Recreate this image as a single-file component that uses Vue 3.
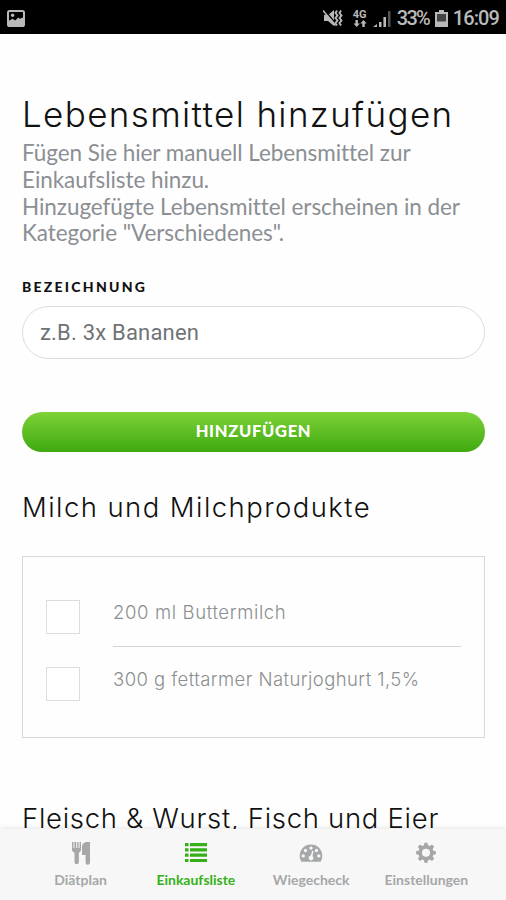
<template>
  <div class="app">
    <!-- Statusleiste -->
    <header class="statusbar">
      <svg class="icon-bild" viewBox="0 0 18 17">
        <rect x="1" y="1" width="16" height="15" rx="1.6" fill="none" stroke="#b9b9b9" stroke-width="2" />
        <path d="M2 15v-4.200l3.600-2 2.600 1.600 3-3 1.600 1.400L16 7.400V15z" fill="#b9b9b9" />
        <circle cx="5.600" cy="5.200" r="1.700" fill="#b9b9b9" />
      </svg>
      <div class="status-rechts">
        <svg class="icon-stumm" viewBox="0 0 20 18">
          <path d="M1 6h4l6-5v16l-6-5H1z" fill="#b9b9b9" />
          <path d="M1.500 1l12.500 15" stroke="#000" stroke-width="1.400" />
          <path d="M0 1.500l12.500 15" stroke="#b9b9b9" stroke-width="1.600" />
          <path d="M14 1.500l-1.500 2.500 2 2.500-2 2.500 2 2.500-2 2.500 1.500 2.500M18 1.500L16.500 4l2 2.500-2 2.500 2 2.500-2 2.500 1.500 2.500" fill="none" stroke="#b9b9b9" stroke-width="1.900" />
        </svg>
        <div class="netz">
          <span>4G</span>
          <svg viewBox="0 0 14 7">
            <path d="M2.500 0v3.500H.5L3.700 7l3.200-3.500h-2V0zM9.300 7V3.500h-2L10.500 0l3.200 3.500h-2V7z" fill="#b9b9b9" />
          </svg>
        </div>
        <svg class="icon-signal" viewBox="0 0 18 17">
          <path d="M0 17l4-3v3zM6 12h2.500v5H6zM10.400 7h2.600v10h-2.600z" fill="#b9b9b9" />
          <path d="M15 1h2.500v16H15z" fill="#555" />
        </svg>
        <span class="prozent">33%</span>
        <svg class="icon-akku" viewBox="0 0 13 17">
          <path d="M4 0h5v2h4v15H0V2h4z" fill="#b9b9b9" />
          <path d="M2 4h9v7.500H2z" fill="#444" />
        </svg>
        <span class="uhrzeit">16:09</span>
      </div>
    </header>

    <main class="inhalt">
      <h1>Lebensmittel hinzufügen</h1>
      <p class="beschreibung">
        Fügen Sie hier manuell Lebensmittel zur<br />
        Einkaufsliste hinzu.<br />
        Hinzugefügte Lebensmittel erscheinen in der<br />
        Kategorie "Verschiedenes".
      </p>

      <form @submit.prevent="hinzufuegen">
        <label for="bezeichnung">Bezeichnung</label>
        <input id="bezeichnung" v-model="bezeichnung" type="text" placeholder="z.B. 3x Bananen" />
        <button type="submit">Hinzufügen</button>
      </form>

      <section v-for="kategorie in kategorien" :key="kategorie.name">
        <h2>{{ kategorie.name }}</h2>
        <ul v-if="kategorie.artikel.length" class="liste">
          <li v-for="artikel in kategorie.artikel" :key="artikel.name" @click="artikel.erledigt = !artikel.erledigt">
            <span class="checkbox" :class="{ aktiv: artikel.erledigt }"></span>
            <span class="artikel-name">{{ artikel.name }}</span>
          </li>
        </ul>
      </section>
    </main>

    <!-- Tab-Navigation -->
    <nav class="tabs">
      <a v-for="tab in tabs" :key="tab.id" :class="['tab', tab.id, { aktiv: tab.id === aktiverTab }]" @click="aktiverTab = tab.id">
        <svg viewBox="0 0 24 24">
          <path :d="tab.icon" fill="currentColor" fill-rule="evenodd" />
        </svg>
        <span>{{ tab.titel }}</span>
      </a>
    </nav>
  </div>
</template>

<script setup>
import { ref } from 'vue'

const bezeichnung = ref('')
const aktiverTab = ref('einkauf')

const kategorien = ref([
  {
    name: 'Milch und Milchprodukte',
    artikel: [
      { name: '200 ml Buttermilch', erledigt: false },
      { name: '300 g fettarmer Naturjoghurt 1,5%', erledigt: false }
    ]
  },
  { name: 'Fleisch & Wurst, Fisch und Eier', artikel: [] }
])

const tabs = [
  {
    id: 'diaet',
    titel: 'Diätplan',
    icon: 'M3 1h1.4v6h1V1h1.8v6h1V1h1.4v6h1V1H12v7.5c0 1.6-.9 2.6-2.100 3.200V21a2 2 0 0 1-4.400 0v-9.300C4 11.100 3 10.100 3 8.500zM21 1v20.500a2 2 0 0 1-4.400 0V14H13V6c0-2.800 2-5 5-5z'
  },
  {
    id: 'einkauf',
    titel: 'Einkaufsliste',
    icon: 'M1 2h3.500v3.200H1zM6 2h17v3.200H6zM1 7.300h3.500v3.200H1zM6 7.300h17v3.200H6zM1 12.600h3.500v3.200H1zM6 12.600h17v3.200H6zM1 17.900h3.500V21H1zM6 17.900h17V21H6z'
  },
  {
    id: 'wiege',
    titel: 'Wiegecheck',
    icon: 'M12 3.500A11.300 11.300 0 0 0 .7 14.800c0 2.200.6 4.200 1.700 6h19.200c1.100-1.800 1.700-3.800 1.700-6A11.300 11.300 0 0 0 12 3.500zM4.200 13.200a1.700 1.700 0 1 1 0 3.400 1.700 1.700 0 0 1 0-3.400zM6.500 7.800a1.700 1.700 0 1 1 0 3.400 1.700 1.700 0 0 1 0-3.400zM12 5.400a1.700 1.700 0 1 1 0 3.400 1.700 1.700 0 0 1 0-3.400zM17.500 7.800a1.700 1.700 0 1 1 0 3.400 1.700 1.700 0 0 1 0-3.400zM19.800 13.200a1.700 1.700 0 1 1 0 3.400 1.700 1.700 0 0 1 0-3.400zM13.100 9.800l1.500.4-1.200 4.800a2.400 2.400 0 1 1-1.500-.4z'
  },
  {
    id: 'einstellungen',
    titel: 'Einstellungen',
    icon: 'M10.300 2h3.400l.5 2.700 2 .8 2.300-1.600 2.400 2.400-1.600 2.300.8 2 2.700.5v3.400l-2.700.5-.8 2 1.600 2.300-2.400 2.400-2.300-1.600-2 .8-.5 2.700h-3.400l-.5-2.700-2-.8-2.300 1.600-2.400-2.400 1.600-2.300-.8-2-2.700-.5v-3.400l2.700-.5.8-2-1.600-2.300 2.400-2.400 2.300 1.600 2-.8zM12 8.400a4.400 4.400 0 1 0 0 8.800 4.400 4.400 0 0 0 0-8.800z'
  }
]

// Neue Einträge landen immer in der Kategorie "Verschiedenes"
function hinzufuegen() {
  const name = bezeichnung.value.trim()
  if (!name) return
  let ziel = kategorien.value.find((k) => k.name === 'Verschiedenes')
  if (!ziel) {
    kategorien.value.push({ name: 'Verschiedenes', artikel: [] })
    ziel = kategorien.value[kategorien.value.length - 1]
  }
  ziel.artikel.push({ name, erledigt: false })
  bezeichnung.value = ''
}
</script>

<style>
body {
  margin: 0;
  background: #fff;
}
</style>

<style scoped>
.app {
  height: 900px;
  display: flex;
  flex-direction: column;
  overflow: hidden;
  background: #fefefe;
  font-family: Lato, sans-serif;
}

/* Statusleiste */
.statusbar {
  height: 34px;
  flex-shrink: 0;
  box-sizing: border-box;
  padding: 2px 7px 0 7px;
  display: flex;
  align-items: center;
  justify-content: space-between;
  background: #000;
  color: #b9b9b9;
  font-family: Roboto, sans-serif;
}
.status-rechts {
  display: flex;
  align-items: center;
}
.icon-bild {
  width: 18px;
  height: 17px;
}
.icon-stumm {
  width: 20px;
  height: 18px;
  margin-right: 10px;
}
.netz {
  width: 15px;
  margin-right: 5px;
  display: flex;
  flex-direction: column;
  font-size: 11px;
  line-height: 10px;
  font-weight: 700;
}
.netz svg {
  width: 14px;
  height: 7px;
}
.icon-signal {
  width: 18px;
  height: 17px;
  margin-right: 6px;
}
.prozent {
  width: 34px;
  margin-right: 4px;
  font-size: 20px;
  font-weight: 500;
  letter-spacing: -1.7px;
}
.icon-akku {
  width: 13px;
  height: 17px;
  margin-right: 5px;
}
.uhrzeit {
  font-size: 20px;
  font-weight: 500;
  letter-spacing: -0.9px;
}

/* Inhalt */
.inhalt {
  flex: 1;
  min-height: 0;
  padding: 59px 21px 0 22px;
}
h1,
h2 {
  margin: 0;
  color: #111;
  font-family: Inter, sans-serif;
  font-weight: 300;
  white-space: nowrap;
}
h1 {
  font-size: 35px;
  line-height: 42px;
  letter-spacing: 1.35px;
}
.beschreibung {
  margin: 5px 0 0;
  color: #8b8f93;
  font-size: 22.5px;
  line-height: 26.75px;
  letter-spacing: -0.06px;
  font-variant-ligatures: none;
  white-space: nowrap;
}
form {
  display: flex;
  flex-direction: column;
}
label {
  margin-top: 31px;
  color: #111;
  font-size: 14px;
  line-height: 18px;
  font-weight: 900;
  letter-spacing: 2.25px;
  text-transform: uppercase;
}
input {
  height: 53px;
  margin-top: 10px;
  padding: 0 17px;
  box-sizing: border-box;
  border: 1.5px solid #dcdcdc;
  border-radius: 27px;
  outline: none;
  background: #fff;
  color: #666a6d;
  font-family: Roboto, sans-serif;
  font-size: 22px;
  letter-spacing: 0.2px;
}
input::placeholder {
  color: #707376;
}
button {
  height: 40px;
  margin-top: 52.5px;
  padding: 0 0 2px;
  border: none;
  border-radius: 20px;
  background: linear-gradient(#7dd337, #3fa910);
  color: #fff;
  font-family: Lato, sans-serif;
  font-size: 16.5px;
  font-weight: 900;
  letter-spacing: 0.7px;
  text-transform: uppercase;
  cursor: pointer;
}

/* Kategorien */
h2 {
  margin-top: 37.5px;
  font-size: 27.5px;
  line-height: 36px;
  letter-spacing: 0.7px;
}
section:first-of-type h2 {
  letter-spacing: 1.43px;
}
.liste {
  list-style: none;
  margin: 31px 0 62px;
  padding: 23px;
  box-sizing: border-box;
  border: 1.5px solid #d8d8d8;
}
.liste li {
  height: 67px;
  display: flex;
  align-items: flex-start;
  cursor: pointer;
}
.checkbox {
  width: 34px;
  height: 34px;
  margin: 20px 33px 0 0;
  box-sizing: border-box;
  flex-shrink: 0;
  border: 1.5px solid #dcdede;
  background: #fff;
}
.checkbox.aktiv {
  background: #4db51c;
}
.artikel-name {
  flex: 1;
  height: 67px;
  padding-top: 20px;
  box-sizing: border-box;
  border-bottom: 1.5px solid #d4d6d6;
  color: #8b8f91;
  font-family: Inter, sans-serif;
  font-weight: 300;
  font-size: 18.5px;
  line-height: 24px;
  letter-spacing: 0.63px;
  white-space: nowrap;
}
.liste li:last-child .artikel-name {
  border-bottom: none;
  letter-spacing: 0.42px;
}

/* Tab-Navigation */
.tabs {
  position: relative;
  height: 71px;
  flex-shrink: 0;
  box-sizing: border-box;
  padding: 0 22px 0 23px;
  display: flex;
  background: #f7f7f7;
  box-shadow: 0 -1px 5px rgba(0, 0, 0, 0.1);
}
.tab {
  flex: 1;
  padding-top: 12px;
  display: flex;
  flex-direction: column;
  align-items: center;
  gap: 6px;
  color: #a5a7a8;
  font-size: 14px;
  line-height: 18px;
  font-weight: 700;
  cursor: pointer;
}
.tab svg {
  width: 24px;
  height: 24px;
}
.tab.einstellungen svg {
  width: 22px;
  height: 22px;
  margin-bottom: 2px;
}
.tab.aktiv {
  color: #35b019;
}
</style>
